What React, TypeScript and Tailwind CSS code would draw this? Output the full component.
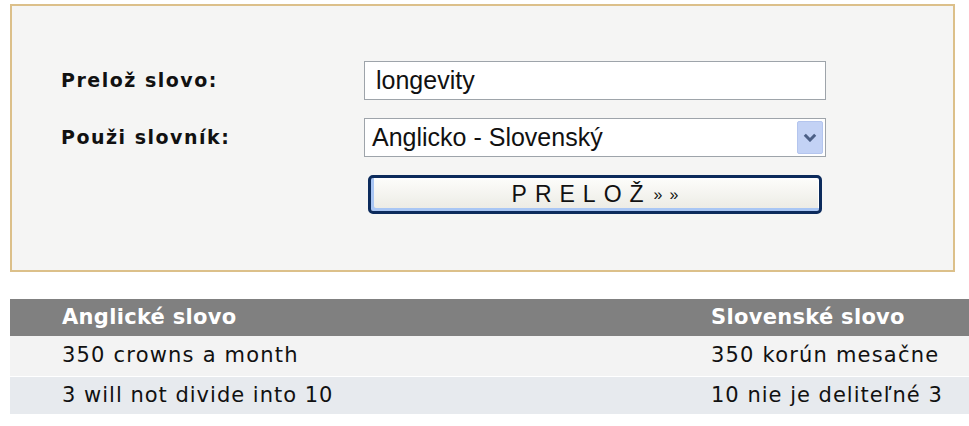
import React from "react";

export default function App() {
  return (
    <div className="w-[969px] h-[426px] bg-white overflow-hidden">
      <div className="ml-[10px] mt-[4px] w-[945px] h-[268px] border-2 border-[#dcc08a] bg-[#f5f5f4] pl-[49px] pt-[55px]">
        <div className="grid grid-cols-[303px_462px] gap-y-[18px]">
          <div className="flex items-center font-['DejaVu_Sans',sans-serif] font-bold text-[19px] tracking-[1.5px] text-[#111]">
            Prelož slovo:
          </div>
          <div className="h-[39px] border border-[#9ea4aa] bg-white flex items-center pl-[11px] font-['Liberation_Sans',Arial,sans-serif] text-[25px] text-[#111]">
            longevity
          </div>
          <div className="flex items-center font-['DejaVu_Sans',sans-serif] font-bold text-[19px] tracking-[1.5px] text-[#111]">
            Použi slovník:
          </div>
          <div className="h-[39px] border border-[#9ea4aa] bg-white flex items-center justify-between pl-[7px] pr-[2px] font-['Liberation_Sans',Arial,sans-serif] text-[25px] text-[#111]">
            <span>Anglicko - Slovenský</span>
            <div className="w-[26px] h-[33px] bg-[#c3d2f5] border border-[#b4c5ee] rounded-[2px] flex items-center justify-center">
              <svg width="14" height="9" viewBox="0 0 14 9">
                <path d="M1.8 1.8 L7 7 L12.2 1.8" fill="none" stroke="#4b5f86" strokeWidth="3" />
              </svg>
            </div>
          </div>
          <div />
          <div className="pl-[4px] pr-[4px]">
            <div className="h-[39px] rounded-[5px] border-[3px] border-[#0c2b5c] bg-gradient-to-b from-[#fdfdfb] to-[#ebeae3] shadow-[inset_3px_-3px_0_#a9c6f4,inset_-1px_2px_0_#ffffff] flex items-center justify-center font-['Liberation_Sans',Arial,sans-serif] text-[#111]">
              <span className="text-[23px] tracking-[8px] mr-[-8px]">PRELOŽ</span>
              <span className="text-[16px] ml-[10px] flex gap-[7px]">
                <span>»</span>
                <span>»</span>
              </span>
            </div>
          </div>
        </div>
      </div>

      <div className="ml-[10px] mt-[27px] w-[959px]">
        <div className="grid grid-cols-[701px_1fr] h-[37px] bg-[#808080] items-center text-white font-['DejaVu_Sans',sans-serif] font-bold text-[21px] tracking-[0.3px]">
          <div className="pl-[52px]">Anglické slovo</div>
          <div>Slovenské slovo</div>
        </div>
        <div className="grid grid-cols-[701px_1fr] h-[40px] bg-[#f3f3f3] items-center text-[#111] font-['DejaVu_Sans',sans-serif] text-[21px] tracking-[1.2px]">
          <div className="pl-[52px]">350 crowns a month</div>
          <div>350 korún mesačne</div>
        </div>
        <div className="grid grid-cols-[701px_1fr] h-[38px] bg-[#e7eaee] border-t border-white items-center text-[#111] font-['DejaVu_Sans',sans-serif] text-[21px] tracking-[1px]">
          <div className="pl-[52px]">3 will not divide into 10</div>
          <div>10 nie je deliteľné 3</div>
        </div>
      </div>
    </div>
  );
}
